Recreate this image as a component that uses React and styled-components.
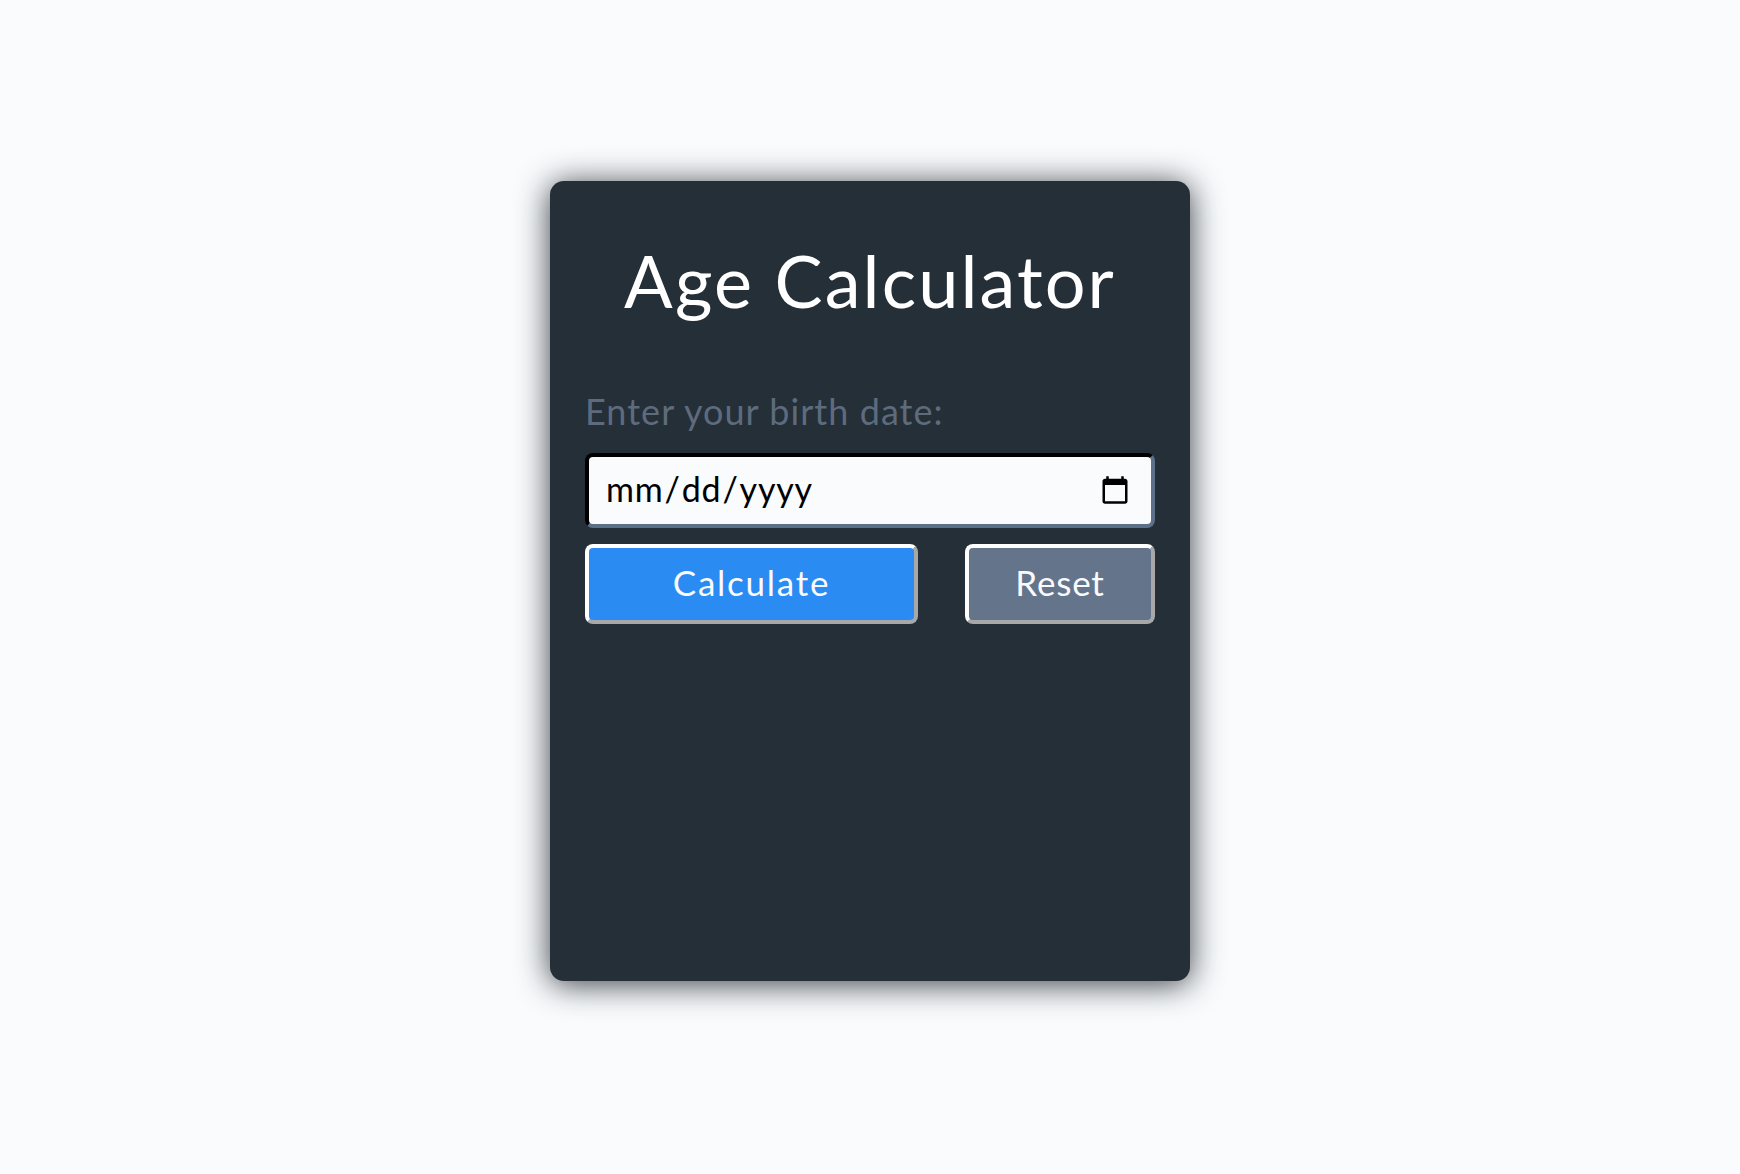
import React from 'react'
import styled, { createGlobalStyle } from 'styled-components'

const GlobalStyle = createGlobalStyle`
  * { box-sizing: border-box; }
  body {
    margin: 0;
    background-color: #f9fbfd;
    font-family: "Lato", "Open Sans", sans-serif;
  }
`

const Page = styled.div`
  min-height: 1174px;
  display: flex;
  justify-content: center;
  align-items: flex-start;
  padding-top: 181px;
`

const Card = styled.main`
  width: 640px;
  height: 800px;
  padding: 35px;
  background-color: #252f38;
  border-radius: 14px;
  box-shadow: 0 3px 32px rgba(20, 26, 32, 0.85);
`

const Title = styled.h1`
  margin: 23px 0 0;
  text-align: center;
  color: #ffffff;
  font-size: 72px;
  line-height: 82px;
  font-weight: 400;
  letter-spacing: 2.1px;
`

const Label = styled.label`
  display: block;
  margin-top: 68px;
  color: #5d6b7d;
  font-size: 36px;
  line-height: 44px;
  letter-spacing: 1.05px;
`

const DateInput = styled.input`
  display: block;
  width: 100%;
  height: 75px;
  margin-top: 20px;
  padding: 0 16px 4px;
  border: 4px solid;
  border-color: #000000 #5c7089 #5c7089 #000000;
  border-radius: 8px;
  background-color: #f9fbfd;
  color: #000000;
  font-family: inherit;
  font-size: 34px;
  letter-spacing: 0.8px;

  &::-webkit-calendar-picker-indicator {
    width: 32px;
    height: 32px;
    margin: 4px 4px 0 0;
    padding: 0;
  }
`

const Actions = styled.div`
  display: flex;
  justify-content: space-between;
  margin-top: 16px;
`

const Button = styled.button`
  width: ${(p) => p.$width}px;
  height: 80px;
  padding: 0 0 4px;
  border: 4px solid;
  border-color: #ffffff #a8a8a8 #a8a8a8 #ffffff;
  border-radius: 8px;
  background-color: ${(p) => p.$color};
  color: #f8fafc;
  font-family: inherit;
  font-size: 35px;
  letter-spacing: ${(p) => p.$tracking}px;
`

export default function App() {
  return (
    <>
      <GlobalStyle />
      <Page>
        <Card>
          <Title>Age Calculator</Title>
          <Label htmlFor="birth">Enter your birth date:</Label>
          <DateInput id="birth" type="date" />
          <Actions>
            <Button $width={333} $color="#2a8bf2" $tracking={1.75}>Calculate</Button>
            <Button $width={190} $color="#64748b" $tracking={0.8}>Reset</Button>
          </Actions>
        </Card>
      </Page>
    </>
  )
}
